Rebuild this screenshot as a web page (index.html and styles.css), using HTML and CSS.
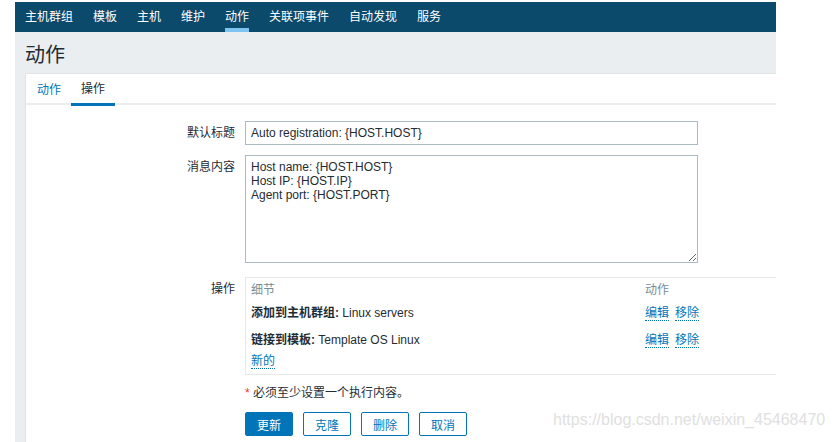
FILE: index.html
```html
<!DOCTYPE html>
<html lang="zh">
<head>
<meta charset="utf-8">
<title>动作</title>
<link rel="stylesheet" href="styles.css">
</head>
<body>
<div class="page">
  <nav class="topnav">
    <a class="nav-item">主机群组</a>
    <a class="nav-item">模板</a>
    <a class="nav-item">主机</a>
    <a class="nav-item">维护</a>
    <a class="nav-item active">动作</a>
    <a class="nav-item">关联项事件</a>
    <a class="nav-item">自动发现</a>
    <a class="nav-item">服务</a>
  </nav>
  <header class="page-header">
    <h1 class="page-title">动作</h1>
  </header>
  <main class="main">
    <section class="panel">
      <ul class="tabs">
        <li class="tab">动作</li>
        <li class="tab active">操作</li>
      </ul>
      <form class="form">
        <label class="form-label">默认标题</label>
        <div class="form-field">
          <input class="text-input" type="text" value="Auto registration: {HOST.HOST}">
        </div>
        <label class="form-label">消息内容</label>
        <div class="form-field">
          <textarea class="text-area">Host name: {HOST.HOST}
Host IP: {HOST.IP}
Agent port: {HOST.PORT}</textarea>
        </div>
        <label class="form-label ops-label">操作</label>
        <div class="form-field ops-field">
          <div class="ops-box">
            <div class="ops-row ops-head">
              <span class="ops-detail">细节</span>
              <span class="ops-actions">动作</span>
            </div>
            <div class="ops-row ops-first">
              <span class="ops-detail"><b>添加到主机群组:</b> Linux servers</span>
              <span class="ops-actions"><a class="link">编辑</a><a class="link link-gap">移除</a></span>
            </div>
            <div class="ops-row ops-second">
              <span class="ops-detail"><b>链接到模板:</b> Template OS Linux</span>
              <span class="ops-actions"><a class="link">编辑</a><a class="link link-gap">移除</a></span>
            </div>
            <div class="ops-new">
              <a class="link">新的</a>
            </div>
          </div>
        </div>
        <div class="form-label"></div>
        <div class="form-field">
          <p class="required"><span class="asterisk">*</span> 必须至少设置一个执行内容。</p>
          <div class="buttons">
            <button type="button" class="btn primary">更新</button>
            <button type="button" class="btn">克隆</button>
            <button type="button" class="btn">删除</button>
            <button type="button" class="btn">取消</button>
          </div>
        </div>
      </form>
    </section>
  </main>
</div>
<div class="watermark">https://blog.csdn.net/weixin_45468470</div>
</body>
</html>
```
FILE: styles.css
```css
html, body {
  margin: 0;
  padding: 0;
  background: #ffffff;
  height: 100%;
  overflow: hidden;
}
body {
  font-family: "Liberation Sans", Arial, "Noto Sans CJK SC", sans-serif;
  font-size: 12px;
  color: #1f2c33;
}
.page {
  width: 761px;
  margin-left: 15px;
  padding-top: 2px;
  height: 440px;
  display: flex;
  flex-direction: column;
  overflow: hidden;
}
.topnav {
  display: flex;
  height: 30px;
  background: #0b4a6b;
  flex-shrink: 0;
}
.nav-item {
  position: relative;
  padding: 0 10px;
  line-height: 30px;
  color: #ffffff;
  font-size: 12px;
  text-decoration: none;
}
.nav-item.active::after {
  content: "";
  position: absolute;
  left: 10px;
  right: 10px;
  bottom: 0;
  height: 4px;
  background: #7fc4f0;
}
.page-header {
  background: #ebeef0;
  height: 41px;
  flex-shrink: 0;
  padding-left: 10px;
  box-sizing: border-box;
}
.page-title {
  margin: 0;
  padding-top: 11px;
  font-size: 20px;
  font-weight: normal;
  line-height: 24px;
  color: #1f2c33;
}
.main {
  flex: 1;
  background: #ebeef0;
  padding-left: 10px;
  display: flex;
}
.panel {
  flex: 1;
  background: #ffffff;
  border-top: 1px solid #dfe4e7;
  border-left: 1px solid #dfe4e7;
}
.tabs {
  list-style: none;
  margin: 0;
  padding: 0 0 0 1px;
  display: flex;
  height: 29px;
  border-bottom: 2px solid #ebeef0;
}
.tab {
  padding: 1px 10px 0 10px;
  line-height: 30px;
  color: #0275b8;
}
.tab.active {
  color: #1f2c33;
  border-bottom: 3px solid #0275b8;
  line-height: 29px;
  height: 28px;
}
.form {
  display: grid;
  grid-template-columns: 209px 1fr;
  column-gap: 10px;
  row-gap: 10px;
  padding-top: 16px;
}
.form-label {
  text-align: right;
  line-height: 24px;
  color: #1f2c33;
}
.form-field {
  min-width: 0;
}
.text-input {
  display: block;
  width: 453px;
  height: 24px;
  box-sizing: border-box;
  border: 1px solid #acbbc2;
  padding: 0 5px;
  font-family: inherit;
  font-size: 12px;
  color: #1f2c33;
  outline: none;
}
.text-area {
  display: block;
  width: 453px;
  height: 108px;
  box-sizing: border-box;
  border: 1px solid #acbbc2;
  padding: 4px 5px;
  font-family: inherit;
  font-size: 12px;
  line-height: 14px;
  color: #1f2c33;
  resize: vertical;
  margin: 0 0 4px 0;
  outline: none;
}
.ops-box {
  width: 620px;
  border: 1px solid #e6e9eb;
  padding: 5px 5px 6px 5px;
}
.ops-row {
  display: flex;
  line-height: 14px;
  height: 14px;
}
.ops-detail {
  width: 394px;
}
.ops-head {
  color: #768d99;
}
.ops-first {
  margin-top: 9px;
}
.ops-second {
  margin-top: 13px;
}
.ops-new {
  margin-top: 7px;
  line-height: 14px;
  height: 14px;
}
.ops-detail b {
  font-weight: bold;
}
.ops-actions {
  display: block;
}
.link {
  color: #0275b8;
  text-decoration: none;
  border-bottom: 1px dotted #0275b8;
  line-height: 14px;
}
.link-gap {
  margin-left: 6px;
}
.required {
  margin: 1px 0 0 0;
  line-height: 14px;
  color: #1f2c33;
}
.asterisk {
  color: #e33734;
}
.buttons {
  display: flex;
  gap: 10px;
  margin-top: 12px;
}
.btn {
  height: 24px;
  width: 48px;
  padding: 0;
  box-sizing: border-box;
  border: 1px solid #0275b8;
  border-radius: 2px;
  background: #ffffff;
  color: #0275b8;
  font-family: inherit;
  font-size: 12px;
}
.btn.primary {
  background: #0275b8;
  color: #ffffff;
}
.watermark {
  position: absolute;
  left: 553px;
  top: 411px;
  font-family: "Liberation Sans", Arial, sans-serif;
  font-size: 16px;
  color: #e0e0e0;
  white-space: nowrap;
}
```
